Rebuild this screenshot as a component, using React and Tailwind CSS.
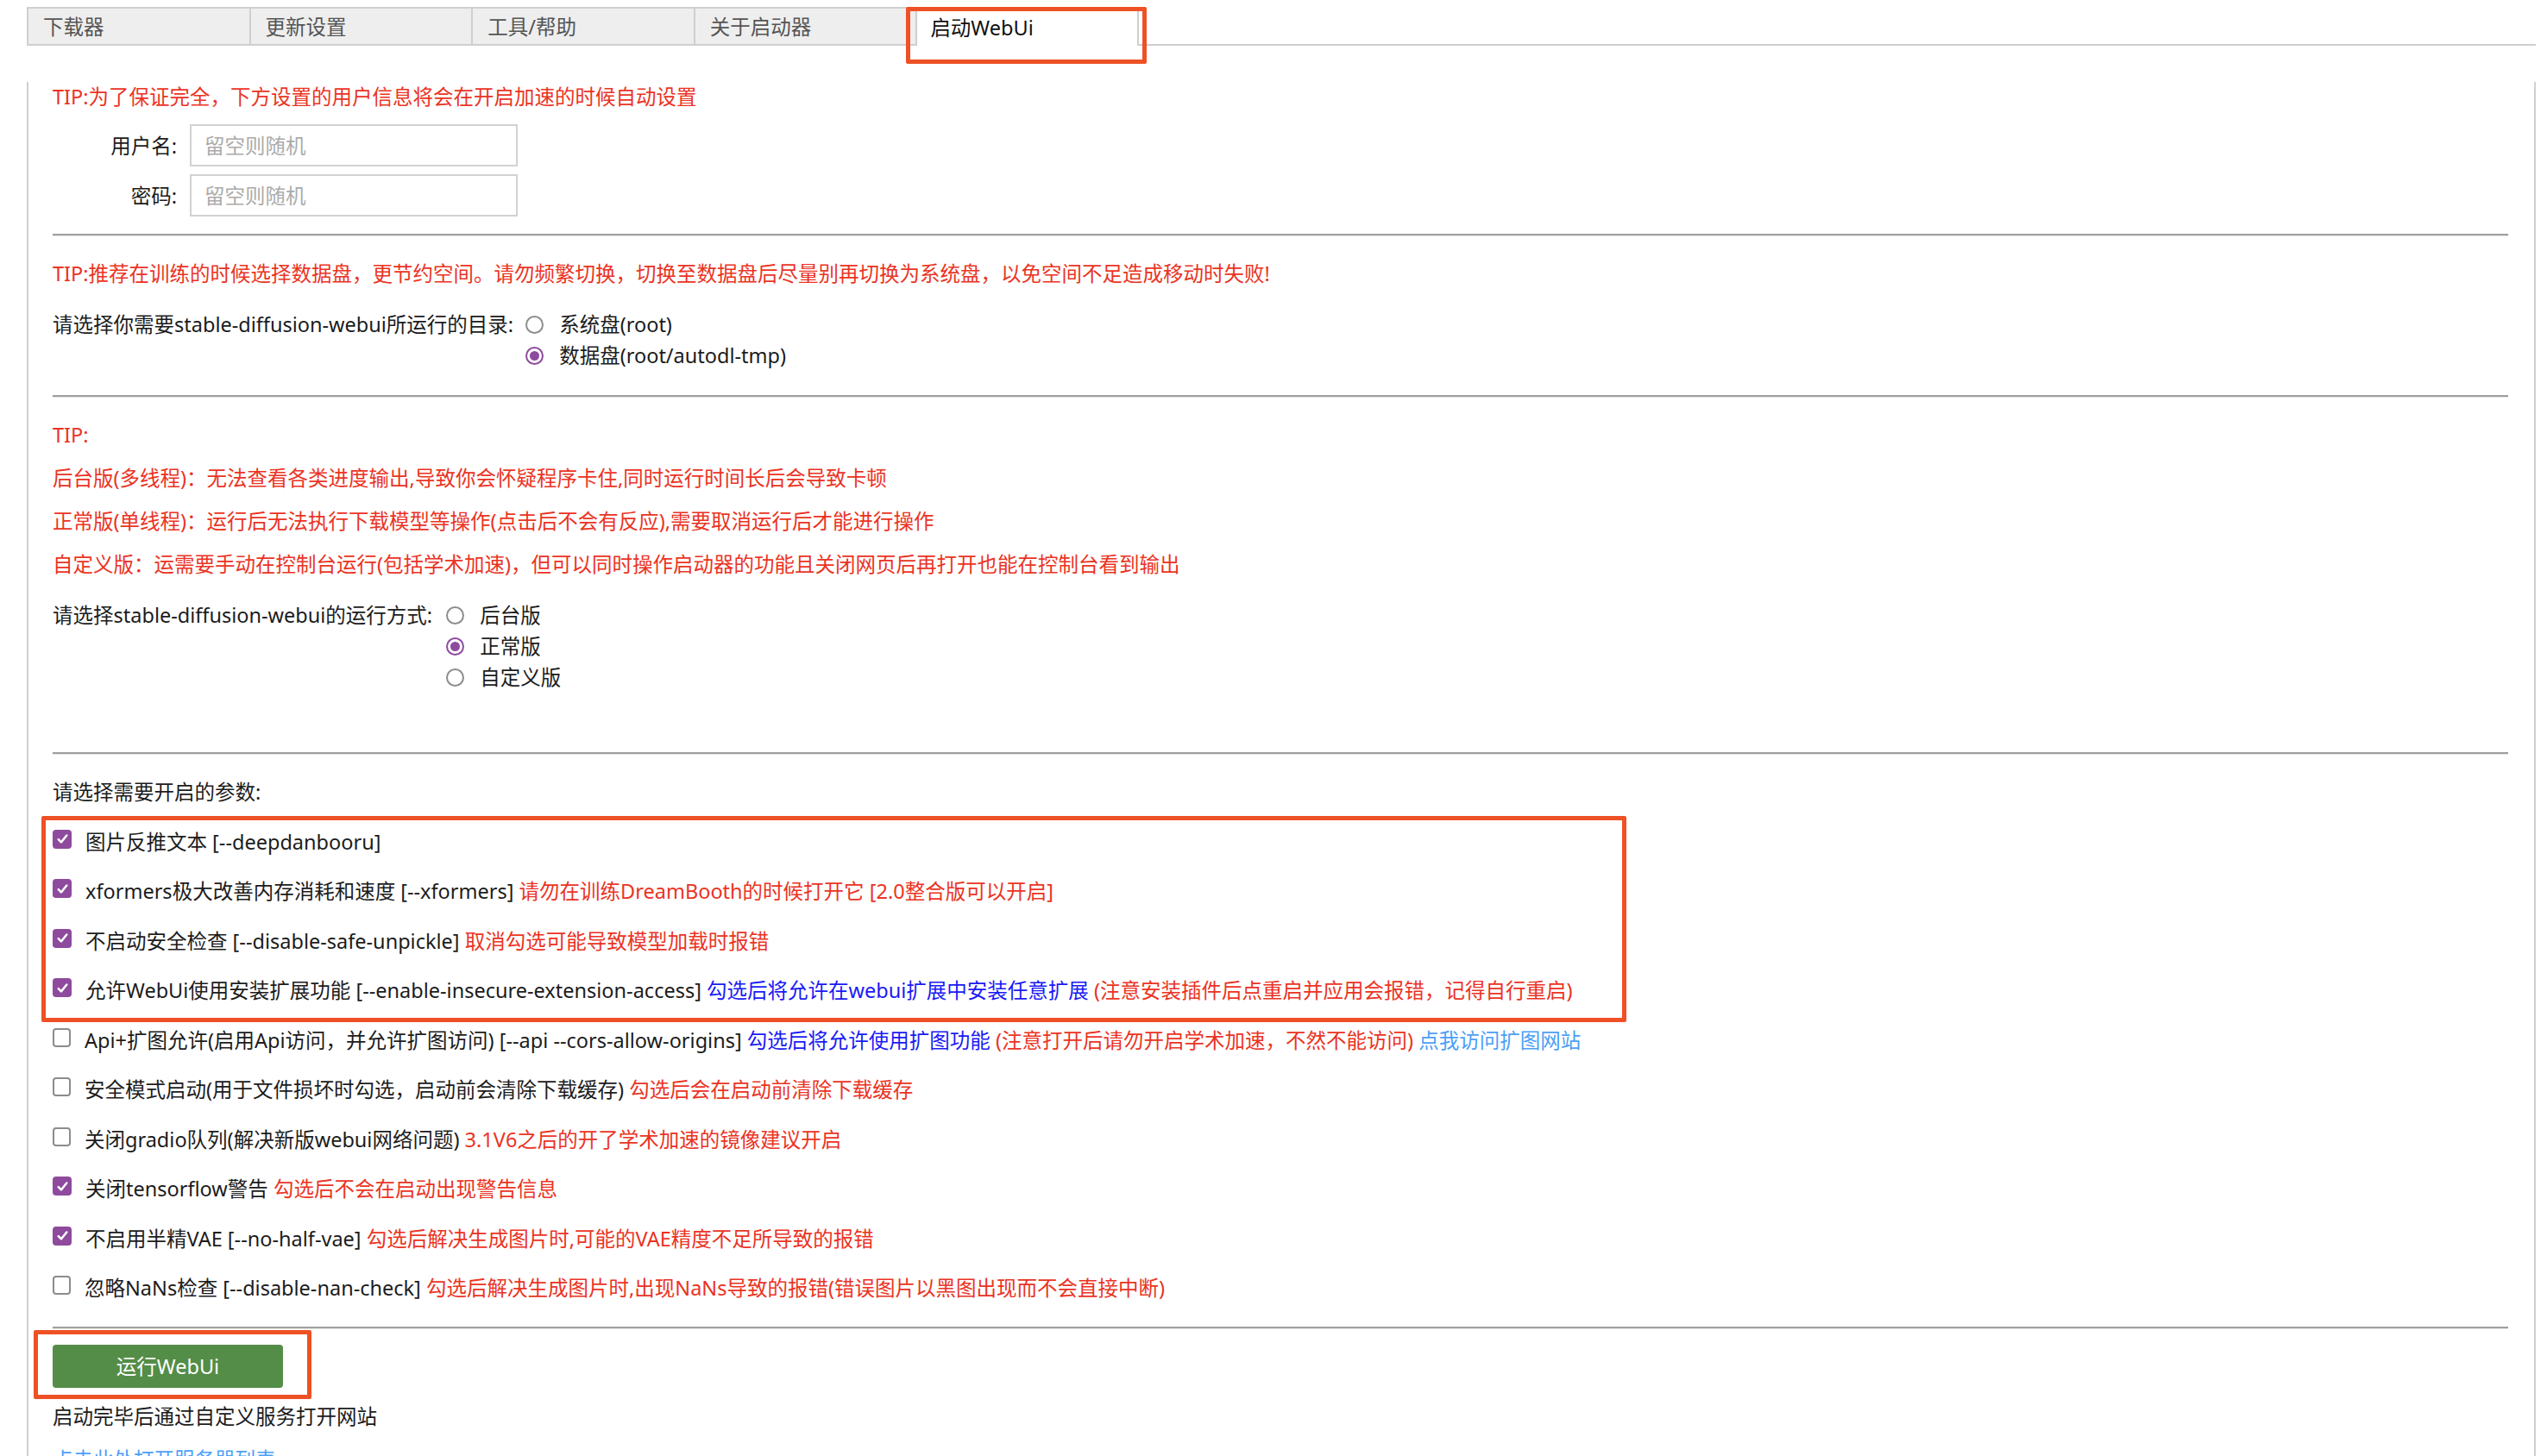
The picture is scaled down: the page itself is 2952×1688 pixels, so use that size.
import React from 'react';

const tabs = ['下载器', '更新设置', '工具/帮助', '关于启动器'];

const Checkbox = ({ checked }) =>
  checked ? (
    <span className="mb-[6px] flex h-[22px] w-[22px] shrink-0 items-center justify-center rounded-[4px] bg-[#8e4a9d]">
      <svg viewBox="0 0 16 16" className="h-[17px] w-[17px]">
        <path d="M3.5 8.6l3 3.1 6-7.4" fill="none" stroke="white" strokeWidth="2.4" strokeLinecap="round" strokeLinejoin="round" />
      </svg>
    </span>
  ) : (
    <span className="mb-[6px] h-[22px] w-[21px] shrink-0 rounded-[4px] border-2 border-[#8c8c8c] bg-white" />
  );

const Radio = ({ checked }) =>
  checked ? (
    <span className="flex h-[21px] w-[21px] shrink-0 items-center justify-center rounded-full border-2 border-[#8e4a9d] bg-white">
      <span className="h-[11px] w-[11px] rounded-full bg-[#8e4a9d]" />
    </span>
  ) : (
    <span className="h-[21px] w-[21px] shrink-0 rounded-full border-2 border-[#8c8c8c] bg-white" />
  );

const Hr = ({ className }) => (
  <div className={className}>
    <div className="h-[2px] bg-[#9f9f9f]" />
    <div className="h-[1px] bg-[#e6e6e6]" />
  </div>
);

const Red = ({ children }) => <span className="text-[#eb3323]">{children}</span>;
const Blue = ({ children }) => <span className="text-[#1a1af5]">{children}</span>;

const rows = [
  { on: true, text: '图片反推文本 [--deepdanbooru]' },
  { on: true, text: 'xformers极大改善内存消耗和速度 [--xformers]', extra: <Red>请勿在训练DreamBooth的时候打开它 [2.0整合版可以开启]</Red> },
  { on: true, text: '不启动安全检查 [--disable-safe-unpickle]', extra: <Red>取消勾选可能导致模型加载时报错</Red> },
  {
    on: true,
    text: '允许WebUi使用安装扩展功能 [--enable-insecure-extension-access]',
    extra: (
      <>
        <Blue>勾选后将允许在webui扩展中安装任意扩展</Blue> <Red>(注意安装插件后点重启并应用会报错，记得自行重启)</Red>
      </>
    ),
  },
  {
    on: false,
    text: 'Api+扩图允许(启用Api访问，并允许扩图访问) [--api --cors-allow-origins]',
    extra: (
      <>
        <Blue>勾选后将允许使用扩图功能</Blue> <Red>(注意打开后请勿开启学术加速，不然不能访问)</Red>{' '}
        <span className="text-[#4ba0f6]">点我访问扩图网站</span>
      </>
    ),
  },
  { on: false, text: '安全模式启动(用于文件损坏时勾选，启动前会清除下载缓存)', extra: <Red>勾选后会在启动前清除下载缓存</Red> },
  { on: false, text: '关闭gradio队列(解决新版webui网络问题)', extra: <Red>3.1V6之后的开了学术加速的镜像建议开启</Red> },
  { on: true, text: '关闭tensorflow警告', extra: <Red>勾选后不会在启动出现警告信息</Red> },
  { on: true, text: '不启用半精VAE [--no-half-vae]', extra: <Red>勾选后解决生成图片时,可能的VAE精度不足所导致的报错</Red> },
  { on: false, text: '忽略NaNs检查 [--disable-nan-check]', extra: <Red>勾选后解决生成图片时,出现NaNs导致的报错(错误图片以黑图出现而不会直接中断)</Red> },
];

const Row = ({ on, text, extra }) => (
  <div className="flex h-[57.5px] items-center gap-[16px]">
    <Checkbox checked={on} />
    <span className="whitespace-pre">
      {text}
      {extra ? ' ' : ''}
      {extra}
    </span>
  </div>
);

const RadioGroup = ({ label, options, value, gap }) => (
  <div className="flex items-start">
    <span className="leading-[36px]">{label}</span>
    <div className={`flex flex-col ${gap}`}>
      {options.map((o) => (
        <div key={o} className="flex h-[36px] items-center gap-[18px]">
          <Radio checked={o === value} />
          <span>{o}</span>
        </div>
      ))}
    </div>
  </div>
);

export default function App() {
  return (
    <div className="h-[1688px] w-full overflow-hidden bg-white pl-[31px] pr-[13px] font-['Noto_Sans','Noto_Sans_CJK_SC',sans-serif] text-[23.5px] leading-[34px] text-[#1c1c1c]">
      {/* tabs */}
      <div className="mt-[8px] flex h-[45px]">
        {tabs.map((t) => (
          <div key={t} className="flex h-full w-[257.6px] items-center border-t-2 border-b-2 border-l-2 border-[#cfcfcf] bg-[#eeeeee] pl-[17px] text-[#555]">
            {t}
          </div>
        ))}
        <div className="relative flex h-full w-[259px] items-center border-x-2 border-t-2 border-[#cfcfcf] bg-white pl-[15px] text-[#111]">
          启动WebUi
          <span className="absolute -top-[2px] -right-[11px] -bottom-[21px] -left-[13px] rounded-[2px] border-[5px] border-[#ee5125]" />
        </div>
        <div className="flex-1 border-b-2 border-[#cfcfcf]" />
      </div>

      {/* panel */}
      <div className="h-[1640px] border-x-2 border-[#cfcfcf] pl-[28px] pr-[30px]">
        <p className="mt-[42px] text-[#eb3323]">TIP:为了保证完全，下方设置的用户信息将会在开启加速的时候自动设置</p>

        <div className="mt-[15px] flex items-center">
          <span className="mr-[15px] w-[144px] text-right">用户名:</span>
          <input placeholder="留空则随机" className="h-[49px] w-[380px] border-2 border-[#d2d2d2] pl-[15px] outline-none placeholder:text-[#ababab]" />
        </div>
        <div className="mt-[9px] flex items-center">
          <span className="mr-[15px] w-[144px] text-right">密码:</span>
          <input placeholder="留空则随机" className="h-[49px] w-[380px] border-2 border-[#d2d2d2] pl-[15px] outline-none placeholder:text-[#ababab]" />
        </div>

        <Hr className="mt-[20px]" />

        <p className="mt-[26px] text-[#eb3323]">
          TIP:推荐在训练的时候选择数据盘，更节约空间。请勿频繁切换，切换至数据盘后尽量别再切换为系统盘，以免空间不足造成移动时失败!
        </p>

        <div className="mt-[24px]">
          <RadioGroup
            label="请选择你需要stable-diffusion-webui所运行的目录:"
            options={['系统盘(root)', '数据盘(root/autodl-tmp)']}
            value="数据盘(root/autodl-tmp)"
            gap="ml-[14px]"
          />
        </div>

        <Hr className="mt-[28px]" />

        <div className="text-[#eb3323]">
          <p className="mt-[26px]">TIP:</p>
          <p className="mt-[16px]">后台版(多线程)：无法查看各类进度输出,导致你会怀疑程序卡住,同时运行时间长后会导致卡顿</p>
          <p className="mt-[16px]">正常版(单线程)：运行后无法执行下载模型等操作(点击后不会有反应),需要取消运行后才能进行操作</p>
          <p className="mt-[16px]">自定义版：运需要手动在控制台运行(包括学术加速)，但可以同时操作启动器的功能且关闭网页后再打开也能在控制台看到输出</p>
        </div>

        <div className="mt-[24px]">
          <RadioGroup
            label="请选择stable-diffusion-webui的运行方式:"
            options={['后台版', '正常版', '自定义版']}
            value="正常版"
            gap="ml-[16px]"
          />
        </div>

        <Hr className="mt-[69px]" />

        <p className="mt-[26px]">请选择需要开启的参数:</p>

        <div className="mt-[12px]">
          <div className="relative">
            {rows.slice(0, 4).map((r) => (
              <Row key={r.text} {...r} />
            ))}
            <span className="absolute -top-[1px] -bottom-[8px] -left-[13px] w-[1837px] rounded-[2px] border-[5px] border-[#ee5125]" />
          </div>
          {rows.slice(4).map((r) => (
            <Row key={r.text} {...r} />
          ))}
        </div>

        <Hr className="mt-[16px]" />

        <div className="relative mt-[18px] w-[267px]">
          <button className="h-[50px] w-[267px] rounded-[4px] bg-[#548d47] text-white">运行WebUi</button>
          <span className="absolute -top-[17px] -right-[33px] -bottom-[13px] -left-[22px] rounded-[2px] border-[5px] border-[#ee5125]" />
        </div>

        <p className="mt-[16px]">启动完毕后通过自定义服务打开网站</p>
        <p className="mt-[16px] text-[#4ba0f6]">点击此处打开服务器列表</p>
      </div>
    </div>
  );
}
